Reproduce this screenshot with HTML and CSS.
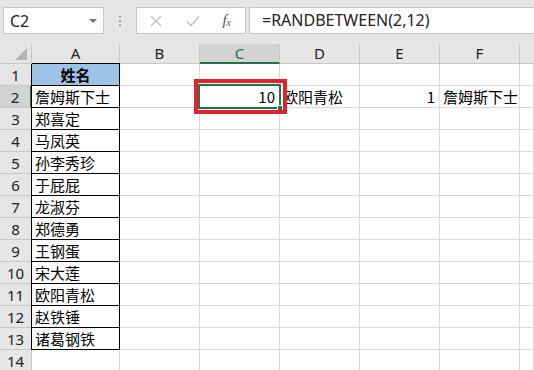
FILE: index.html
```html
<!DOCTYPE html>
<html lang="zh">
<head>
<meta charset="utf-8">
<link rel="stylesheet" href="styles.css">
</head>
<body>
<div class="toolbar">
  <div class="namebox"><span class="nb-text">C2</span><span class="nb-arrow"></span></div>
  <div class="dots"><i></i><i></i><i></i></div>
  <div class="fxbox">
    <svg class="ic" width="14" height="14" viewBox="0 0 14 14"><path d="M2 2 L12 12 M12 2 L2 12" stroke="#c4c4c4" stroke-width="1.4" fill="none"/></svg>
    <svg class="ic" width="16" height="14" viewBox="0 0 16 14"><path d="M2 7.5 L6 11.5 L14 2.5" stroke="#c4c4c4" stroke-width="1.6" fill="none"/></svg>
    <span class="fx">f<sub>x</sub></span>
  </div>
  <div class="formula">=RANDBETWEEN(2,12)</div>
</div>
<div class="sheet">
  <div class="grid">
    <div class="h corner"><span class="tri"></span></div>
    <div class="h col">A</div><div class="h col">B</div><div class="h col sel-col">C</div><div class="h col">D</div><div class="h col">E</div><div class="h col">F</div><div class="h col last"></div>

    <div class="h row">1</div><div class="c ta thead">姓名</div><div class="c"></div><div class="c"></div><div class="c"></div><div class="c"></div><div class="c"></div><div class="c"></div>
    <div class="h row sel-row">2</div><div class="c ta">詹姆斯下士</div><div class="c"></div><div class="c num">10</div><div class="c">欧阳青松</div><div class="c num">1</div><div class="c">詹姆斯下士</div><div class="c"></div>
    <div class="h row">3</div><div class="c ta">郑喜定</div><div class="c"></div><div class="c"></div><div class="c"></div><div class="c"></div><div class="c"></div><div class="c"></div>
    <div class="h row">4</div><div class="c ta">马凤英</div><div class="c"></div><div class="c"></div><div class="c"></div><div class="c"></div><div class="c"></div><div class="c"></div>
    <div class="h row">5</div><div class="c ta">孙李秀珍</div><div class="c"></div><div class="c"></div><div class="c"></div><div class="c"></div><div class="c"></div><div class="c"></div>
    <div class="h row">6</div><div class="c ta">于屁屁</div><div class="c"></div><div class="c"></div><div class="c"></div><div class="c"></div><div class="c"></div><div class="c"></div>
    <div class="h row">7</div><div class="c ta">龙淑芬</div><div class="c"></div><div class="c"></div><div class="c"></div><div class="c"></div><div class="c"></div><div class="c"></div>
    <div class="h row">8</div><div class="c ta">郑德勇</div><div class="c"></div><div class="c"></div><div class="c"></div><div class="c"></div><div class="c"></div><div class="c"></div>
    <div class="h row">9</div><div class="c ta">王钢蛋</div><div class="c"></div><div class="c"></div><div class="c"></div><div class="c"></div><div class="c"></div><div class="c"></div>
    <div class="h row">10</div><div class="c ta">宋大莲</div><div class="c"></div><div class="c"></div><div class="c"></div><div class="c"></div><div class="c"></div><div class="c"></div>
    <div class="h row">11</div><div class="c ta">欧阳青松</div><div class="c"></div><div class="c"></div><div class="c"></div><div class="c"></div><div class="c"></div><div class="c"></div>
    <div class="h row">12</div><div class="c ta">赵铁锤</div><div class="c"></div><div class="c"></div><div class="c"></div><div class="c"></div><div class="c"></div><div class="c"></div>
    <div class="h row">13</div><div class="c ta">诸葛钢铁</div><div class="c"></div><div class="c"></div><div class="c"></div><div class="c"></div><div class="c"></div><div class="c"></div>
    <div class="h row">14</div><div class="c"></div><div class="c"></div><div class="c"></div><div class="c"></div><div class="c"></div><div class="c"></div><div class="c"></div>
  </div>
  <div class="selection"><span class="handle"></span></div>
  <div class="redbox"></div>
</div>
</body>
</html>
```

FILE: styles.css
```css
* { box-sizing: border-box; }
html, body { margin: 0; padding: 0; }
body {
  width: 534px;
  height: 370px;
  overflow: hidden;
  background: #fff;
  font-family: "Noto Sans CJK SC", "Noto Sans", sans-serif;
}

.toolbar {
  height: 44px;
  background: #e6e6e6;
  display: flex;
  align-items: flex-start;
  padding: 7px 0 0 3px;
}
.namebox {
  width: 101px;
  height: 27px;
  background: #fff;
  border: 1px solid #c6c6c6;
  display: flex;
  align-items: center;
  justify-content: space-between;
  padding: 0 6px 0 6px;
}
.nb-text {
  font-family: "Noto Sans", "Open Sans", sans-serif;
  font-size: 16px;
  color: #222;
}
.nb-arrow {
  width: 0; height: 0;
  border-left: 4px solid transparent;
  border-right: 4px solid transparent;
  border-top: 4px solid #777;
}
.dots {
  width: 32px;
  height: 27px;
  display: flex;
  flex-direction: column;
  align-items: center;
  justify-content: center;
  gap: 2px;
}
.dots i {
  display: block;
  width: 2px; height: 2px;
  background: #a6a6a6;
}
.fxbox {
  width: 110px;
  height: 27px;
  background: #fff;
  border: 1px solid #c6c6c6;
  display: flex;
  align-items: center;
  justify-content: space-between;
  padding: 0 14px 0 12px;
}
.fx {
  font-family: "Liberation Serif", serif;
  font-style: italic;
  font-size: 15px;
  color: #555;
  line-height: 1;
}
.fx sub { font-size: 10px; vertical-align: -1px; }
.formula {
  margin-left: 3px;
  flex: 1;
  height: 27px;
  background: #fff;
  border: 1px solid #c6c6c6;
  border-right: none;
  padding-left: 12px;
  font-family: "Noto Sans", "Open Sans", sans-serif;
  font-size: 16px;
  line-height: 25px;
  color: #222;
}

.sheet { position: relative; }
.grid {
  display: grid;
  grid-template-columns: 32px 88px 80px 80px 80px 80px 80px 1fr;
  grid-template-rows: 20px repeat(14, 22px);
}
.h {
  background: #e6e6e6;
  border-right: 1px solid #c8c8c8;
  border-bottom: 1px solid #c8c8c8;
  font-family: "Noto Sans", "Open Sans", sans-serif;
  font-size: 15px;
  color: #222;
  display: flex;
  align-items: center;
  justify-content: center;
}
.h.col { line-height: 1; }
.h.last { border-right: none; }
.corner { position: relative; justify-content: flex-end; align-items: flex-end; padding: 0 4px 3px 0; }
.tri {
  width: 0; height: 0;
  border-left: 12px solid transparent;
  border-bottom: 12px solid #b5b5b5;
}
.sel-col {
  background: #d3d3d3;
  color: #217346;
  border-bottom: 2px solid #217346;
}
.sel-row {
  background: #d3d3d3;
  color: #217346;
  border-right: 2px solid #217346;
}
.row { color: #222; }
.c {
  border-right: 1px solid #d9d9d9;
  border-bottom: 1px solid #d9d9d9;
  font-size: 15px;
  line-height: 21px;
  padding: 0 3px;
  color: #000;
  white-space: nowrap;
  overflow: visible;
}
.c.num { text-align: right; padding-right: 4px; }
.ta {
  border-right: 1px solid #000;
  border-bottom: 1px solid #000;
  box-shadow: -1px 0 0 #000;
}
.thead {
  background: #9dc3e6;
  font-weight: bold;
  text-align: center;
  box-shadow: -1px 0 0 #000, 0 -1px 0 #000;
}

.selection {
  position: absolute;
  left: 198px;
  top: 40px;
  width: 83px;
  height: 25px;
  border: 2px solid #217346;
}
.handle {
  position: absolute;
  right: -4px;
  bottom: -4px;
  width: 6px;
  height: 6px;
  background: #217346;
  border: 1px solid #fff;
}
.redbox {
  position: absolute;
  left: 194px;
  top: 35px;
  width: 93px;
  height: 35px;
  border: 4px solid #e2232a;
}
```
